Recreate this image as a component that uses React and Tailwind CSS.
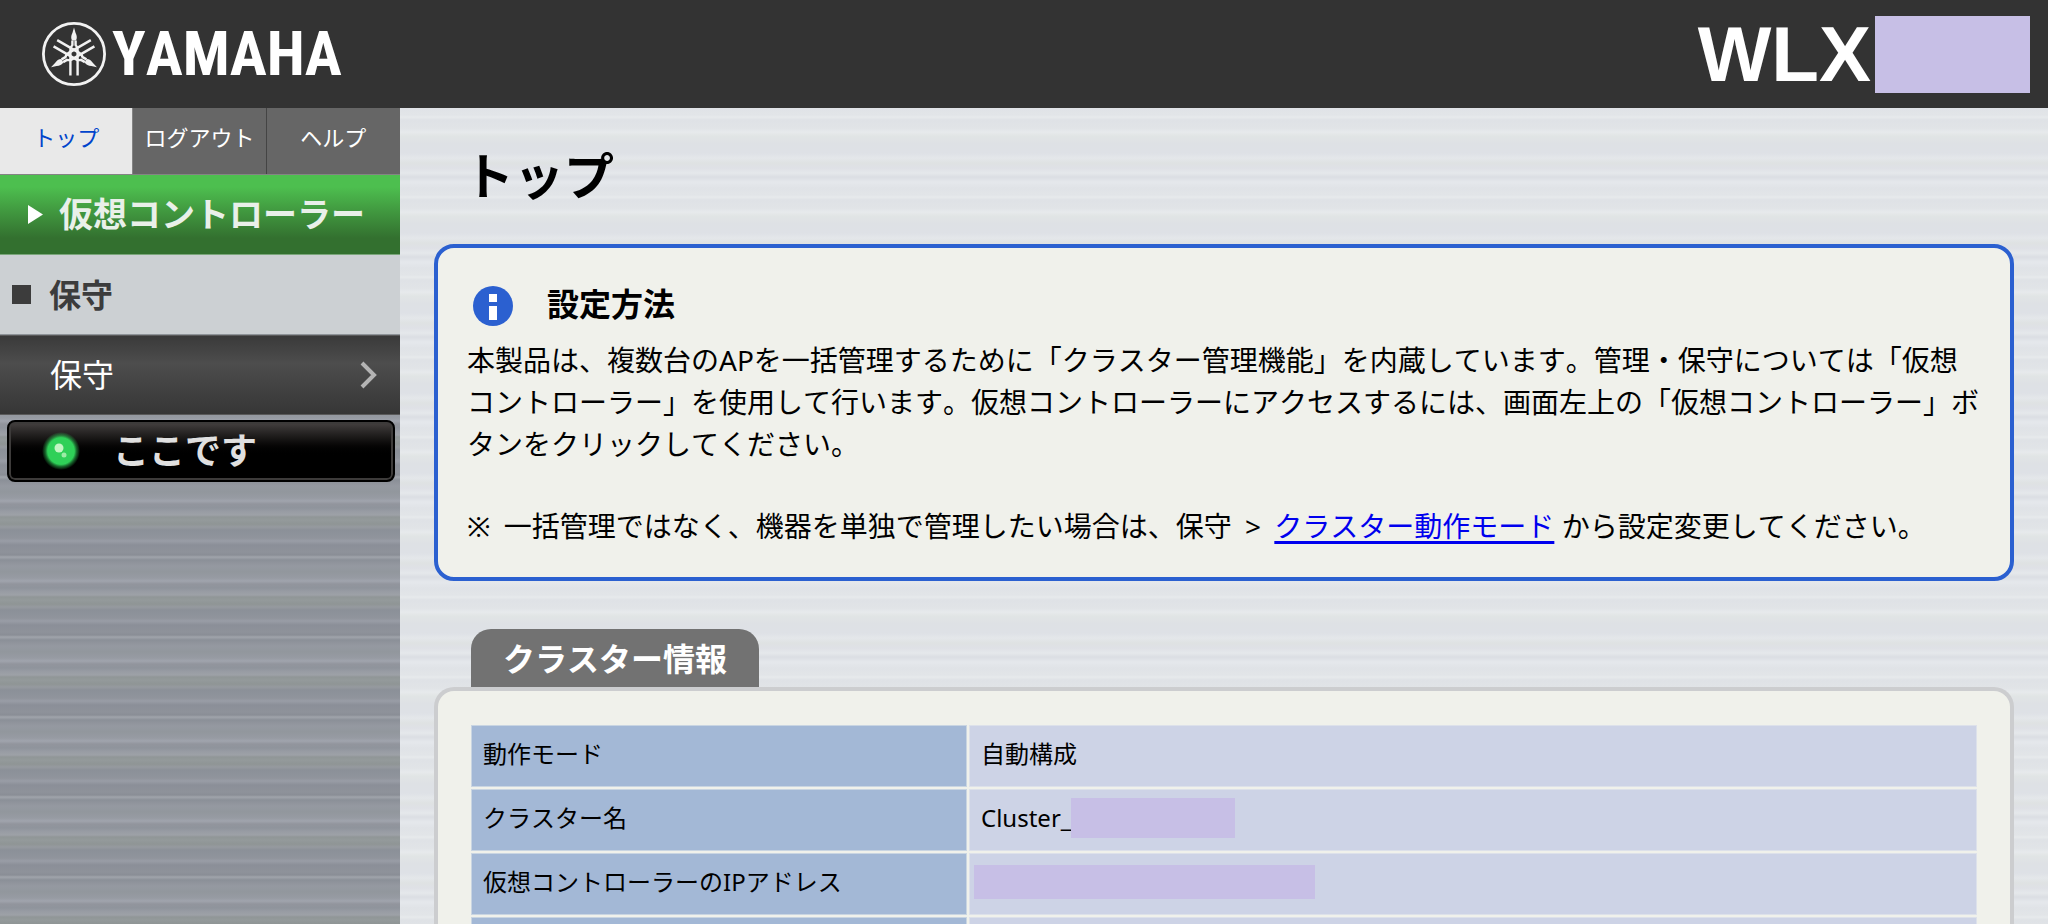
import { ChevronRight } from 'lucide-react'

const FONT = "font-['Noto_Sans','Noto_Sans_CJK_JP',sans-serif] [font-kerning:none]"

// Brushed metal backgrounds, one tile is 80px high
const METAL_LIGHT =
  'bg-[repeating-linear-gradient(180deg,#e0e3e7_0px,#e2e5e8_7px,#e7eaec_9px,#dfe2e6_12px,#e1e4e7_20px,#e7eaec_24px,#e1e5e5_28px,#dee1e5_36px,#dee1e6_45px,#e4e7ea_50px,#dfe2e3_55px,#dfe1e6_60px,#e5e8eb_65px,#dbdee3_69px,#e5e8ec_74px,#e0e3e7_80px)]'
const METAL_DARK =
  'bg-[repeating-linear-gradient(180deg,#8f949c_0px,#979ba3_3px,#9da1a7_7px,#909697_9px,#949a9b_12px,#8f9595_16px,#969a9f_19px,#8b9098_22px,#90949c_30px,#999da6_33px,#8b8f98_37px,#8e929a_44px,#8a8e96_47px,#a0a4ab_49px,#8b9098_52px,#9599a1_58px,#92979d_64px,#979ba3_70px,#a0a4ad_73px,#92959d_76px,#8f949c_80px)]'

const NAV_ITEMS = [
  { label: 'トップ', active: true },
  { label: 'ログアウト' },
  { label: 'ヘルプ' },
]

const CLUSTER_ROWS = [
  { label: '動作モード', value: '自動構成' },
  { label: 'クラスター名', value: 'Cluster_', mask: 'h-10 w-[164px]' },
  { label: '仮想コントローラーのIPアドレス', mask: 'h-[34px] w-[341px]' },
  { label: '' },
]

const Fork = ({ angle }) => (
  <g transform={`rotate(${angle} 32 32)`}>
    <path d="M32 5.5 L33.6 11 Q35.8 15 34 18.5 H30 Q28.2 15 30.4 11 Z" fill="#f2f2f2" />
    <path
      d="M30.4 18.5 V23 Q28.4 25 28.4 28 V53.5 M33.6 18.5 V23 Q35.6 25 35.6 28 V53.5"
      fill="none"
      stroke="#f2f2f2"
      strokeWidth="2.4"
    />
  </g>
)

const Logo = () => (
  <div className="flex items-center gap-1.5 text-white">
    <svg viewBox="0 0 64 64" className="size-16" aria-hidden="true">
      <circle cx="32" cy="32" r="30.6" fill="none" stroke="#f2f2f2" strokeWidth="2.8" />
      <Fork angle={0} />
      <Fork angle={120} />
      <Fork angle={240} />
    </svg>
    <span className="font-['Liberation_Sans_Narrow','Roboto_Condensed','Liberation_Sans',sans-serif] text-[62px] leading-none font-bold">
      YAMAHA
    </span>
  </div>
)

const Header = () => (
  <header className="flex h-[108px] shrink-0 items-center justify-between bg-[#333333] pr-[18px] pl-[42px]">
    <Logo />
    <div className="flex items-center gap-1">
      <span className="font-['Liberation_Sans',sans-serif] text-[78px] leading-none font-bold text-white">WLX</span>
      <span className="h-[77px] w-[155px] bg-[#c7bfe6]" />
    </div>
  </header>
)

const Sidebar = () => (
  <aside className={`w-[400px] shrink-0 ${METAL_DARK}`}>
    <nav className="grid h-[67px] grid-cols-3 border-b border-[#848484] bg-[#666666]">
      {NAV_ITEMS.map(({ label, active }) => (
        <a
          key={label}
          href="#"
          className={`border-r pb-2 text-center text-[22px] leading-[58px] last:border-r-0 ${
            active ? 'border-[#848484] bg-[#e9e9e9] text-[#0044cc]' : 'border-[#444444] text-white'
          }`}
        >
          {label}
        </a>
      ))}
    </nav>

    <button className="flex h-20 w-full items-center gap-4 border-b border-[#7aa67a] bg-linear-to-b from-[#4dbf4f] from-15% to-[#33702f] to-80% pl-7 text-[34px] font-bold text-[#e9f0e9]">
      <svg viewBox="0 0 15 19" className="h-[19px] w-[15px]" aria-hidden="true">
        <path d="M0 0 L15 9.5 L0 19 Z" fill="#ffffff" />
      </svg>
      仮想コントローラー
    </button>

    <h2 className="flex h-20 items-center gap-[18px] border-b border-[#8f9499] bg-[#ccd0d3] pl-3 text-[32px] font-bold text-[#3c3c3c]">
      <span className="size-[19px] bg-[#3c3c3c]" />
      保守
    </h2>

    <a
      href="#"
      className="flex h-20 items-center justify-between border-y border-[#5a5a5a] bg-linear-to-b from-[#3a3a3a] via-[#4d4d4d] via-35% to-[#363636] pr-2 pl-[50px] text-[32px] text-white"
    >
      保守
      <ChevronRight className="size-12 text-[#b4b4b4]" strokeWidth={2} strokeLinecap="butt" strokeLinejoin="miter" />
    </a>

    <div className="pt-[5px] pr-[5px] pl-[7px]">
      <button className="flex h-[62px] w-full items-center gap-8 rounded-lg border-2 border-black bg-linear-to-b from-[#474342] via-black via-60% to-black pl-8 text-[36px] leading-none font-bold text-[#e0e0e0] inset-ring-2 inset-ring-[#3d3b3a]">
        <svg viewBox="0 0 40 40" className="size-10" aria-hidden="true">
          <defs>
            <radialGradient id="glow">
              <stop offset="70%" stopColor="#2fd058" />
              <stop offset="82%" stopColor="#2fd058" stopOpacity="0.5" />
              <stop offset="100%" stopColor="#2fd058" stopOpacity="0" />
            </radialGradient>
          </defs>
          <circle cx="20" cy="20" r="19" fill="url(#glow)" />
          <circle cx="18" cy="17" r="4.5" fill="#c4f5c4" />
          <circle cx="23" cy="24" r="2.5" fill="#9ceca6" />
        </svg>
        ここです
      </button>
    </div>
  </aside>
)

const InfoBox = () => (
  <section className="rounded-[20px] border-4 border-[#2b60d0] bg-[#f0f1eb] pt-[33px] pr-[30px] pb-[30px] pl-[29px]">
    <h2 className="flex h-[50px] items-center gap-[34px] pl-1.5 text-[32px] font-bold">
      <svg viewBox="0 0 40 40" className="size-10" aria-hidden="true">
        <circle cx="20" cy="20" r="20" fill="#2b60d0" />
        <path d="M16 8 H24 V16 H16 Z M16 20 H24 V34 H16 Z" fill="#ffffff" />
      </svg>
      <span className="pb-1">設定方法</span>
    </h2>
    <div className="pt-2 text-[28px] leading-[42px]">
      <p>
        本製品は、複数台のAPを一括管理するために「クラスター管理機能」を内蔵しています。管理・保守については「仮想コントローラー」を使用して行います。仮想コントローラーにアクセスするには、画面左上の「仮想コントローラー」ボタンをクリックしてください。
      </p>
      <p className="mt-10">
        <span className="mr-1.5">※</span> 一括管理ではなく、機器を単独で管理したい場合は、保守{' '}
        <span className="mx-1.5">&gt;</span>{' '}
        <a href="#" className="text-[#0000ee] underline decoration-[3px] underline-offset-4">
          クラスター動作モード
        </a>{' '}
        から設定変更してください。
      </p>
    </div>
  </section>
)

const ClusterInfo = () => (
  <section className="mt-12">
    <h2 className="ml-[37px] h-[58px] w-fit rounded-t-[20px] bg-[#727272] px-8 text-[32px] leading-[60px] font-bold text-white">
      クラスター情報
    </h2>
    <div className="rounded-t-[20px] border-4 border-b-0 border-[#cccdcf] bg-[#f0f1eb] px-[31px] pt-8">
      <table className="w-full table-fixed border-separate border-spacing-0.5 text-left text-[24px]">
        <tbody>
          {CLUSTER_ROWS.map(({ label, value, mask }) => (
            <tr key={label} className="h-[62px]">
              <th className="w-[496px] border border-[#c9d5e2] bg-[#a3b8d6] px-[11px] pb-1 font-normal">{label}</th>
              <td className={`border border-[#dde1ea] bg-[#cdd3e6] pb-1 ${value ? 'pl-[11px]' : 'pl-1'}`}>
                <div className="flex items-center">
                  {value}
                  {mask && <span className={`bg-[#c7bfe6] ${mask}`} />}
                </div>
              </td>
            </tr>
          ))}
        </tbody>
      </table>
    </div>
  </section>
)

const App = () => (
  <div className={`flex h-screen flex-col overflow-hidden text-black ${FONT}`} lang="ja">
    <Header />
    <div className="flex min-h-0 flex-1">
      <Sidebar />
      <main className={`min-w-0 flex-1 overflow-hidden px-[34px] ${METAL_LIGHT}`}>
        <h1 className="flex h-[136px] items-center pl-[30px] text-[50px] font-bold">トップ</h1>
        <InfoBox />
        <ClusterInfo />
      </main>
    </div>
  </div>
)

export default App
